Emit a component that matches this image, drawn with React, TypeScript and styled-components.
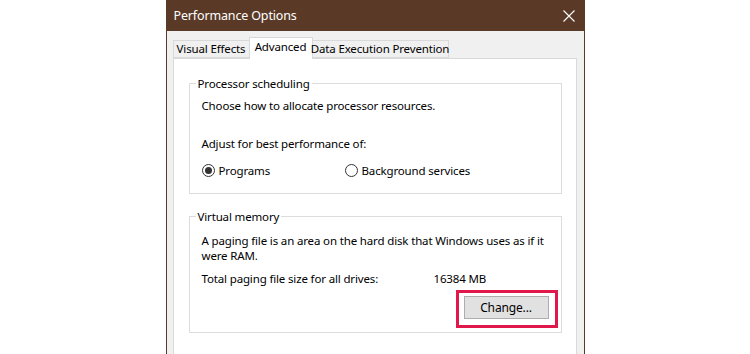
import React from 'react'
import styled, { createGlobalStyle } from 'styled-components'

const GlobalStyle = createGlobalStyle`
  html, body {
    margin: 0;
    padding: 0;
    background: #ffffff;
    overflow: hidden;
  }
  body {
    font-family: 'Noto Sans', 'Open Sans', sans-serif;
    font-size: 11.5px;
    letter-spacing: -0.15px;
    color: #000;
  }
`

const Page = styled.div`
  width: 750px;
  height: 354px;
  display: flex;
  justify-content: center;
  align-items: flex-start;
  overflow: hidden;
`

const Window = styled.div`
  width: 417px;
  flex-shrink: 0;
  border: 1px solid #5a3a26;
  border-top: none;
  background: #f0f0f0;
  display: flex;
  flex-direction: column;
`

const TitleBar = styled.div`
  height: 31px;
  flex-shrink: 0;
  background: #5a3a26;
  color: #ffffff;
  display: flex;
  align-items: center;
  justify-content: space-between;
  padding: 0 10px 0 8px;
  margin: 0 -1px;
  font-size: 12.5px;
`

const CloseIcon = () => (
  <svg width="12" height="12" viewBox="0 0 12 12">
    <path d="M0.5 0.5 L11.5 11.5 M11.5 0.5 L0.5 11.5" stroke="#ffffff" strokeWidth="1.1" />
  </svg>
)

const Body = styled.div`
  padding: 6px 7px 0 6px;
  display: flex;
  flex-direction: column;
`

const TabStrip = styled.div`
  display: flex;
  align-items: flex-end;
  height: 21px;
  flex-shrink: 0;
  position: relative;
  z-index: 1;
`

const Tab = styled.div<{ $active?: boolean; $w: number }>`
  box-sizing: border-box;
  flex-shrink: 0;
  height: ${({ $active }) => ($active ? '22px' : '18px')};
  margin-bottom: ${({ $active }) => ($active ? '-1px' : '0')};
  padding-top: ${({ $active }) => ($active ? '1px' : '0')};
  width: ${({ $w }) => $w}px;
  background: ${({ $active }) => ($active ? '#ffffff' : '#f0f0f0')};
  border: 1px solid #d9d9d9;
  border-bottom: ${({ $active }) => ($active ? 'none' : '1px solid #d9d9d9')};
  margin-left: -1px;
  display: flex;
  align-items: ${({ $active }) => ($active ? 'flex-start' : 'center')};
  justify-content: center;
  line-height: 16px;
  white-space: nowrap;
  &:first-child {
    margin-left: 0;
  }
`

const TabPage = styled.div`
  background: #ffffff;
  border: 1px solid #d9d9d9;
  height: 340px;
  flex-shrink: 0;
  padding: 17px 14px 0 15px;
  display: flex;
  flex-direction: column;
  gap: 15px;
`

const Group = styled.fieldset`
  margin: 0;
  border: 1px solid #dcdcdc;
  padding: 0 12px;
  min-width: 0;
  display: flex;
  flex-direction: column;
`

const Legend = styled.legend`
  padding: 0 2px;
  margin-left: -6px;
  line-height: 15px;
`

const Line = styled.div<{ $top?: number }>`
  line-height: 15px;
  margin-top: ${({ $top }) => $top ?? 0}px;
  white-space: nowrap;
`

const RadioRow = styled.div`
  display: flex;
  align-items: center;
  margin-top: 12px;
  margin-bottom: 15px;
  line-height: 15px;
`

const RadioItem = styled.label<{ $w?: number }>`
  display: flex;
  align-items: center;
  gap: 4px;
  width: ${({ $w }) => ($w ? `${$w}px` : 'auto')};
`

const RadioCircle = styled.span<{ $checked?: boolean }>`
  box-sizing: border-box;
  width: 13px;
  height: 13px;
  border-radius: 50%;
  border: 1px solid #333333;
  background: #ffffff;
  display: flex;
  align-items: center;
  justify-content: center;
  &::after {
    content: '';
    width: 7px;
    height: 7px;
    border-radius: 50%;
    background: ${({ $checked }) => ($checked ? '#333333' : 'transparent')};
  }
`

const SizeRow = styled.div`
  display: flex;
  line-height: 15px;
  margin-top: 8px;
`

const SizeLabel = styled.span`
  width: 232px;
`

const ButtonRow = styled.div`
  display: flex;
  justify-content: flex-end;
  margin-top: 4px;
  margin-right: -9px;
  margin-bottom: 4px;
`

const Highlight = styled.div`
  border: 3px solid #e0184b;
  padding: 3px 6px 6px 5px;
`

const Button = styled.button`
  box-sizing: border-box;
  width: 85px;
  height: 23px;
  background: #e1e1e1;
  border: 1px solid #adadad;
  font-family: inherit;
  font-size: 12px;
  letter-spacing: inherit;
  color: #000;
  padding: 0;
`

export default function App() {
  return (
    <>
      <GlobalStyle />
      <Page>
        <Window>
          <TitleBar>
            <span>Performance Options</span>
            <CloseIcon />
          </TitleBar>
          <Body>
            <TabStrip>
              <Tab $w={77}>Visual Effects</Tab>
              <Tab $w={64} $active>
                Advanced
              </Tab>
              <Tab $w={137}>Data Execution Prevention</Tab>
            </TabStrip>
            <TabPage>
              <Group>
                <Legend>Processor scheduling</Legend>
                <Line $top={7}>Choose how to allocate processor resources.</Line>
                <Line $top={23}>Adjust for best performance of:</Line>
                <RadioRow>
                  <RadioItem $w={143}>
                    <RadioCircle $checked />
                    Programs
                  </RadioItem>
                  <RadioItem>
                    <RadioCircle />
                    Background services
                  </RadioItem>
                </RadioRow>
              </Group>
              <Group>
                <Legend>Virtual memory</Legend>
                <Line $top={9}>
                  A paging file is an area on the hard disk that Windows uses as if it
                </Line>
                <Line>were RAM.</Line>
                <SizeRow>
                  <SizeLabel>Total paging file size for all drives:</SizeLabel>
                  <span>16384 MB</span>
                </SizeRow>
                <ButtonRow>
                  <Highlight>
                    <Button>Change...</Button>
                  </Highlight>
                </ButtonRow>
              </Group>
            </TabPage>
          </Body>
        </Window>
      </Page>
    </>
  )
}
